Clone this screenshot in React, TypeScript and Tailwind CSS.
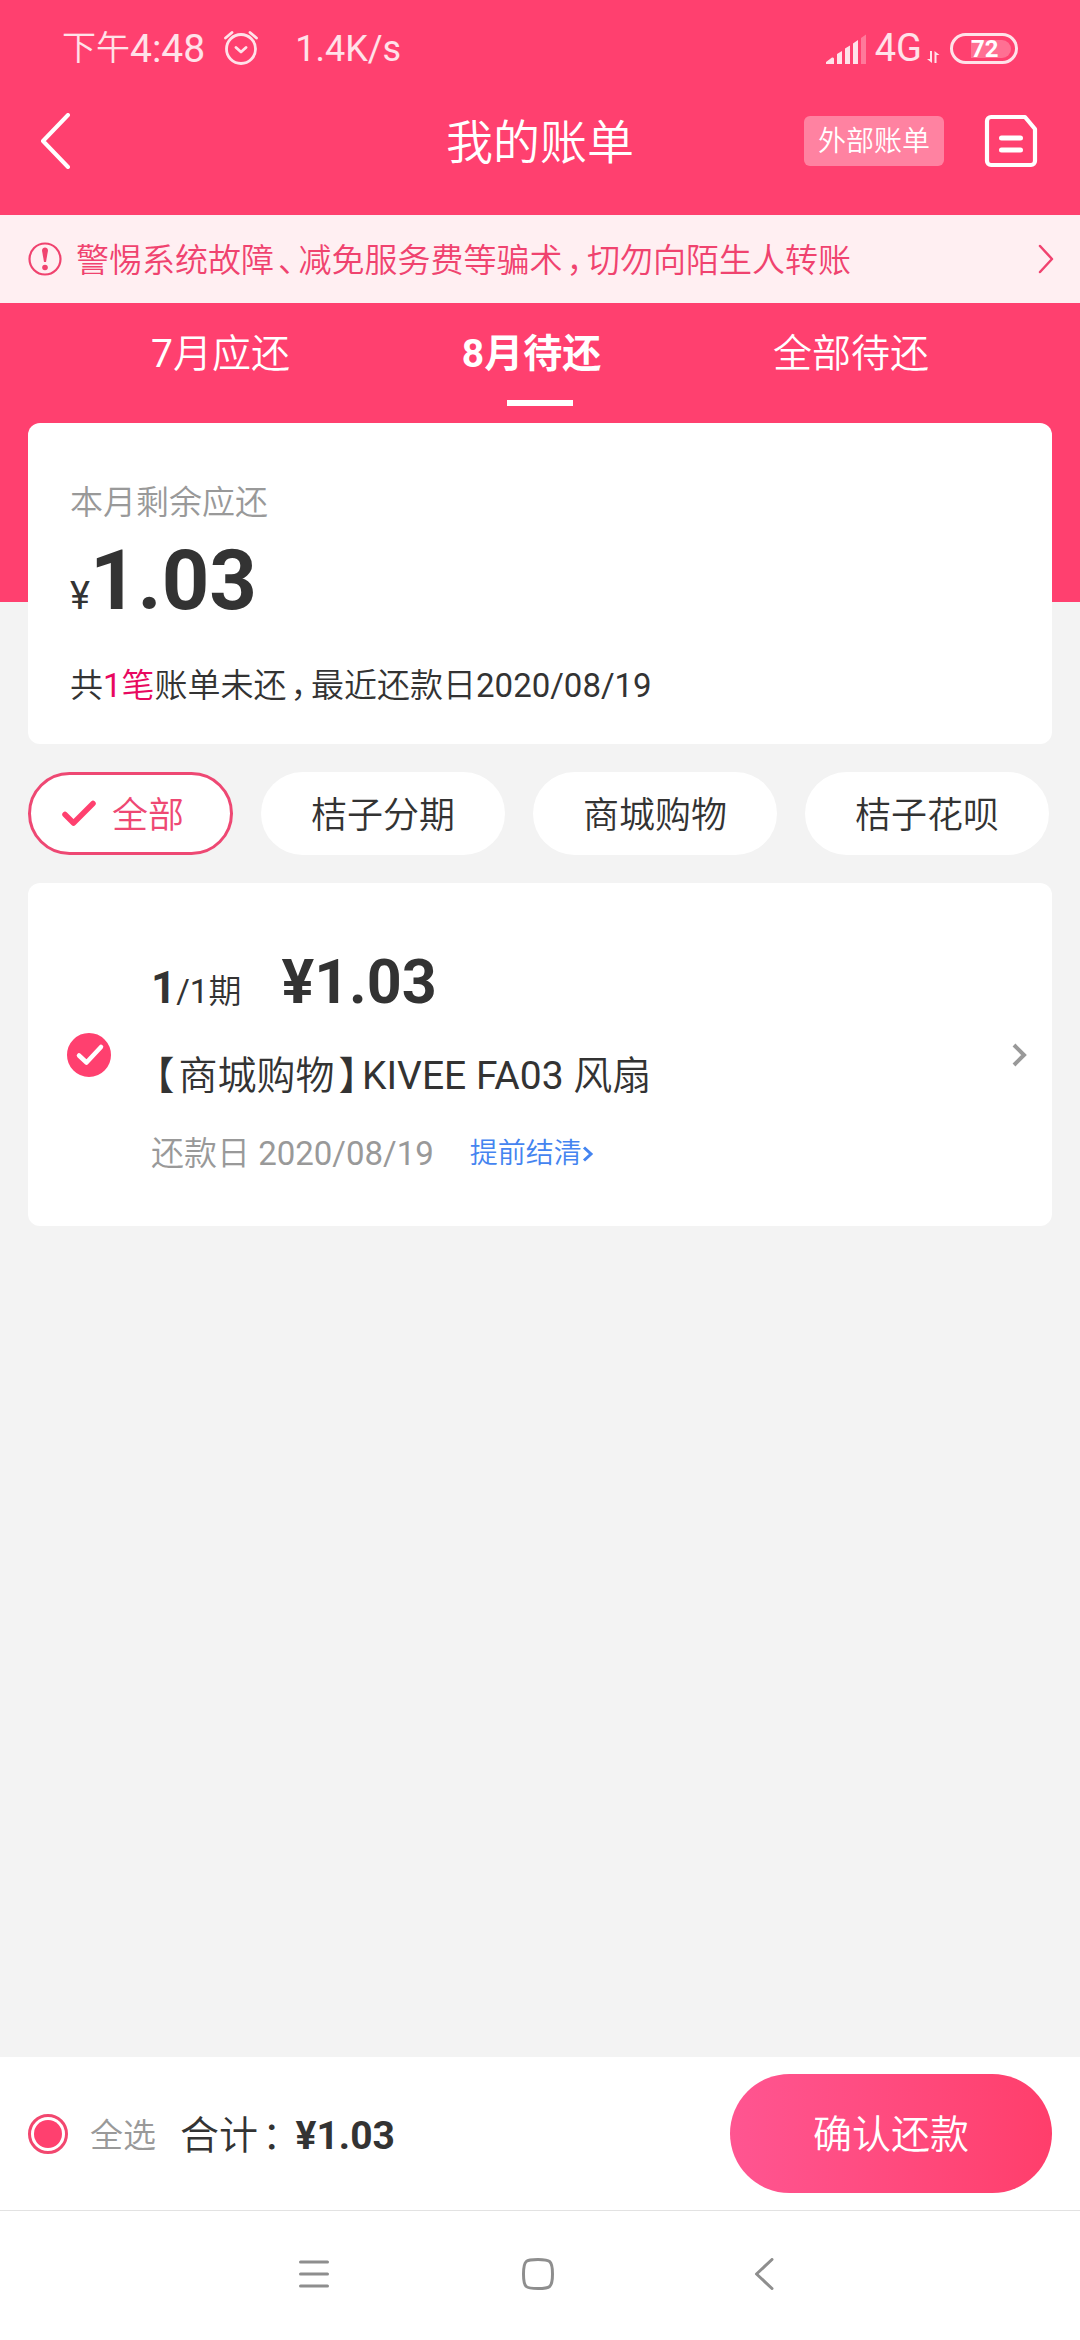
import { useState } from 'react';
import type { ReactNode } from 'react';

const TABS = ['7月应还', '8月待还', '全部待还'];
const FILTERS = ['全部', '桔子分期', '商城购物', '桔子花呗'];

// Sets full-width punctuation on a narrower advance than the characters round it
function CjkText({ children }: { children: string }) {
  return (
    <>
      {children.split(/([、，：【】])/).map((part, i) =>
        i % 2 === 1 ? (
          <span key={i} className="px-1 [font-feature-settings:'halt']">
            {part}
          </span>
        ) : (
          part
        )
      )}
    </>
  );
}

function AlarmIcon() {
  return (
    <svg className="h-9 w-9" viewBox="0 0 36 36" fill="none" stroke="currentColor" strokeWidth="2.8" strokeLinecap="round">
      <circle cx="18" cy="19" r="14.5" />
      <path d="M2.5 8 9 2.5M27 2.5 33.5 8M13 17.5l5 4.5 5-4.5" strokeLinejoin="round" />
    </svg>
  );
}

function SignalIcon() {
  return (
    <svg className="h-[30px] w-[41px]" viewBox="0 0 41 30" fill="currentColor">
      <path d="M0 30v-2l6-4.5a1.5 1.5 0 0 1 2 1.5v5zM11 30V20l5-3v13zM19 30V14.5l5-3V30zM27 30V9.5L32 6v24z" />
      <path d="M35 30V4l5-3.5V30z" opacity=".35" />
    </svg>
  );
}

function DataArrowsIcon() {
  return (
    <svg className="h-3.5 w-3.5" viewBox="0 0 14 14" fill="currentColor">
      <path d="M4 1h2v12L1 9h3zM8.5 13V1l5 4h-3v8z" />
    </svg>
  );
}

function BillIcon() {
  return (
    <svg className="h-[54px] w-[54px]" viewBox="0 0 54 54" fill="none" stroke="currentColor" strokeWidth="4.2" strokeLinecap="round" strokeLinejoin="round">
      <path d="M7 3h34L51 15v32a4 4 0 0 1-4 4H7a4 4 0 0 1-4-4V7a4 4 0 0 1 4-4z" />
      <path d="M17.5 24h19M17.5 36h19" strokeWidth="5" />
    </svg>
  );
}

function WarningIcon() {
  return (
    <svg className="h-[34px] w-[34px]" viewBox="0 0 34 34" fill="none">
      <circle cx="17" cy="17" r="15.5" stroke="currentColor" strokeWidth="2.2" />
      <path d="M14 8.5c0-4 6-4 6 0L18 20h-2z" fill="currentColor" />
      <circle cx="17" cy="25.5" r="2.8" fill="currentColor" />
    </svg>
  );
}

function StatusBar() {
  return (
    <div className="flex h-24 items-center px-[62px] text-white/85">
      <span className="text-[34px] leading-10">下午</span>
      <span className="pt-0.5 text-[39px] leading-10">4:48</span>
      <span className="ml-[18px]">
        <AlarmIcon />
      </span>
      <span className="ml-9 pt-0.5 text-[36px] leading-10">1.4K/s</span>
      <div className="ml-auto flex items-end">
        <SignalIcon />
        <span className="ml-2 text-[38px] leading-8">4G</span>
        <span className="ml-1">
          <DataArrowsIcon />
        </span>
        <div className="ml-2.5 flex h-[31px] w-[68px] items-center rounded-full border-3 border-white/85 p-1">
          <span className="ml-3.5 flex h-[18px] w-10 items-center rounded-r-full bg-white/25 text-2xl leading-5 font-bold text-white">72</span>
        </div>
      </div>
    </div>
  );
}

function Header() {
  return (
    <header className="grid h-[119px] grid-cols-[1fr_auto_1fr] items-center px-10 pb-[30px]">
      <button aria-label="返回" className="w-[30px]">
        <svg className="h-14 w-[30px]" viewBox="0 0 30 56" fill="none" stroke="currentColor" strokeWidth="4" strokeLinecap="round" strokeLinejoin="round">
          <path d="M28 2 3 28l25 26" />
        </svg>
      </button>
      <h1 className="pt-1 text-[47px] leading-14">我的账单</h1>
      <div className="flex items-center justify-end gap-10 pr-0.5">
        <button className="h-[50px] rounded-md bg-white/35 px-3.5 pt-0.5 text-[28px] leading-10">外部账单</button>
        <button aria-label="账单记录">
          <BillIcon />
        </button>
      </div>
    </header>
  );
}

function Notice() {
  return (
    <a href="#notice" className="flex h-22 items-center bg-[#ffeff2] pr-[26px] pl-7 text-[33px] leading-12 text-[#f0436f]">
      <WarningIcon />
      <span className="ml-3.5 flex-1 pt-1">
        <CjkText>警惕系统故障、减免服务费等骗术，切勿向陌生人转账</CjkText>
      </span>
      <svg className="h-8 w-4" viewBox="0 0 16 32" fill="none" stroke="currentColor" strokeWidth="2.5" strokeLinecap="round" strokeLinejoin="round">
        <path d="M2 3l12 13L2 29" />
      </svg>
    </a>
  );
}

function Card({ children, className }: { children: ReactNode; className: string }) {
  return <section className={`rounded-xl bg-white ${className}`}>{children}</section>;
}

function SummaryCard() {
  return (
    <Card className="px-[42px] pt-14 pb-[34px]">
      <h2 className="text-[33px] leading-12 text-[#999]">本月剩余应还</h2>
      <p className="flex items-baseline leading-[108px]">
        <span className="text-[38px]">¥</span>
        <span className="text-[83px] font-bold">1.03</span>
      </p>
      <p className="mt-3 text-[33px] leading-12">
        共<span className="text-[#e8085f]">1笔</span>
        <CjkText>账单未还，最近还款日2020/08/19</CjkText>
      </p>
    </Card>
  );
}

function BillCard() {
  return (
    <Card className="flex items-center pr-6 pl-[39px]">
      <div className="grid shrink-0">
        <input
          id="bill-1"
          type="checkbox"
          defaultChecked
          className="peer col-start-1 row-start-1 h-11 w-11 appearance-none rounded-full border-3 border-[#ccc] checked:border-[#ff406f] checked:bg-[#ff406f]"
        />
        <svg className="pointer-events-none col-start-1 row-start-1 h-11 w-11 text-transparent peer-checked:text-white" viewBox="0 0 44 44" fill="none" stroke="currentColor" strokeWidth="4.5" strokeLinecap="round" strokeLinejoin="round">
          <path d="M12 22.5l7.5 7L34 14" />
        </svg>
      </div>
      <div className="ml-10 flex-1 pt-[59px] pb-12">
        <label htmlFor="bill-1" className="block">
          <span className="flex items-baseline leading-20">
            <b className="text-[44px] font-bold">1</b>
            <span className="text-[33px]">/1期</span>
            <b className="ml-10 text-[61px] font-bold">¥1.03</b>
          </span>
          <span className="mt-3 block text-[39px] leading-16">
            <CjkText>【商城购物】KIVEE FA03 风扇</CjkText>
          </span>
        </label>
        <div className="mt-5.5 flex items-center">
          <span className="text-[33px] leading-12 text-[#999]">还款日 2020/08/19</span>
          <a href="#settle" className="ml-9 flex items-center text-[28px] leading-12 text-[#4484f0]">
            提前结清
            <svg className="h-4 w-3" viewBox="0 0 12 16" fill="none" stroke="currentColor" strokeWidth="3">
              <path d="M2 1.5 9 8l-7 6.5" />
            </svg>
          </a>
        </div>
      </div>
      <svg className="h-6 w-4" viewBox="0 0 16 24" fill="none" stroke="#999" strokeWidth="4">
        <path d="M2 2l10 10L2 22" />
      </svg>
    </Card>
  );
}

function PayBar() {
  return (
    <div className="flex h-[153px] items-center bg-white px-7">
      <input
        id="select-all"
        type="radio"
        defaultChecked
        className="h-10 w-10 appearance-none rounded-full border-3 border-[#f2476f] p-[3px] checked:bg-[#ff406f] checked:bg-clip-content"
      />
      <label htmlFor="select-all" className="ml-[22px] pt-1 text-[33px] leading-12 text-[#999]">
        全选
      </label>
      <p className="ml-6 pt-1 text-[39px] leading-12">
        <CjkText>合计：</CjkText>
      </p>
      <b className="ml-2.5 pt-1 text-[39px] leading-12 font-bold">¥1.03</b>
      <button className="ml-auto h-[119px] w-[322px] rounded-full bg-linear-to-r from-[#ff5591] to-[#ff3e6b] pt-1 text-[39px] text-white">确认还款</button>
    </div>
  );
}

function SystemNav() {
  return (
    <nav className="flex h-[130px] items-center justify-center gap-48 border-t border-[#e2e2e2] bg-white pr-1 pb-1 text-[#8e8e8e]">
      <button aria-label="菜单">
        <svg className="h-8 w-8" viewBox="0 0 32 32" stroke="currentColor" strokeWidth="3" strokeLinecap="round">
          <path d="M2.5 4h27M2.5 16h27M2.5 28h27" />
        </svg>
      </button>
      <button aria-label="主页">
        <svg className="h-8 w-8" viewBox="0 0 32 32" fill="none" stroke="currentColor" strokeWidth="3">
          <path d="M16 1.5c12 0 14.5 1 14.5 14.5S28 30.5 16 30.5 1.5 30 1.5 16 4 1.5 16 1.5z" />
        </svg>
      </button>
      <button aria-label="后退">
        <svg className="h-8 w-8" viewBox="0 0 32 32" fill="none" stroke="currentColor" strokeWidth="3" strokeLinecap="round" strokeLinejoin="round">
          <path d="M26 1.5 10.5 16 26 30.5" />
        </svg>
      </button>
    </nav>
  );
}

export default function App() {
  const [tab, setTab] = useState(1);
  const [filter, setFilter] = useState(0);

  return (
    <div className="flex min-h-screen flex-col bg-[#f3f3f3] font-['Roboto','Noto_Sans_CJK_SC_DemiLight','Noto_Sans_CJK_SC',sans-serif] text-[#333]">
      <div className="bg-[#ff406f] pb-[196px] text-white">
        <StatusBar />
        <Header />
        <Notice />
        <div role="tablist" className="flex h-[97px] items-center justify-between px-[151px] pt-1 text-[39px] leading-14">
          {TABS.map((label, i) => (
            <button
              key={label}
              role="tab"
              aria-selected={i === tab}
              onClick={() => setTab(i)}
              className={i === tab ? "font-['Roboto','Noto_Sans_CJK_SC',sans-serif] font-bold" : ''}
            >
              {label}
            </button>
          ))}
        </div>
        <div className="mx-auto h-1.5 w-[66px] bg-white" />
      </div>

      <main className="-mt-[179px] flex flex-1 flex-col gap-7 px-7">
        <SummaryCard />
        <div className="flex gap-7">
          {FILTERS.map((label, i) => (
            <button
              key={label}
              aria-pressed={i === filter}
              onClick={() => setFilter(i)}
              className={`flex h-[83px] shrink-0 items-center gap-4 rounded-full bg-white text-[36px] leading-14 ${
                i === filter ? 'border-3 border-[#ee4873] pr-[46px] pl-[31px] text-[#ee4873]' : 'px-[50px]'
              }`}
            >
              {i === filter && (
                <svg className="h-7 w-[34px]" viewBox="0 0 34 28" fill="none" stroke="#ff406f" strokeWidth="5.5" strokeLinecap="round" strokeLinejoin="round">
                  <path d="M3 14.5l8.5 8.5L31 3.5" />
                </svg>
              )}
              <span className="pt-1">{label}</span>
            </button>
          ))}
        </div>
        <BillCard />
      </main>

      <PayBar />
      <SystemNav />
    </div>
  );
}
